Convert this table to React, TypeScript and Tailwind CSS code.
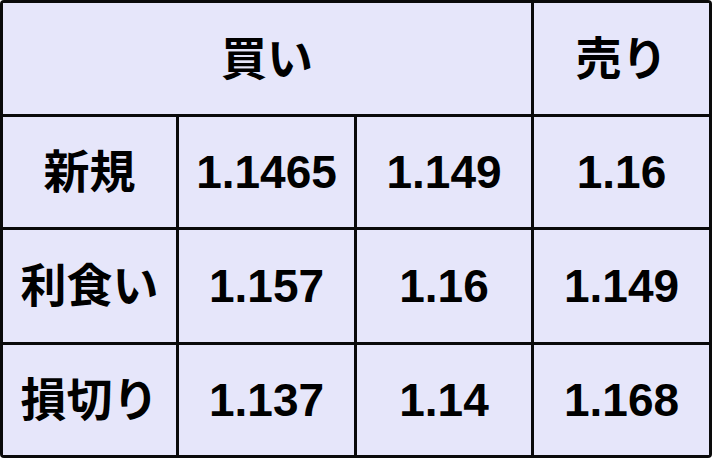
import { Fragment } from "react";

const rows = [
  { label: "新規", values: ["1.1465", "1.149", "1.16"] },
  { label: "利食い", values: ["1.157", "1.16", "1.149"] },
  { label: "損切り", values: ["1.137", "1.14", "1.168"] },
];

function Cell({ children, className = "" }: { children: React.ReactNode; className?: string }) {
  return (
    <div className={`bg-[#e6e6fa] flex items-center justify-center text-black font-bold text-[46px] leading-none ${className}`}>
      {children}
    </div>
  );
}

export default function App() {
  return (
    <div className="w-[712px] h-[458px] bg-white">
      <div
        className="w-full h-full bg-[#0a0a0a] rounded-[4px] p-[3px] grid grid-cols-[173px_175px_174px_175px] grid-rows-[111px_110px_112px_110px] gap-[3px]"
        style={{ fontFamily: '"Liberation Sans", "Noto Sans CJK JP", sans-serif' }}
      >
        <Cell className="col-span-3">買い</Cell>
        <Cell>売り</Cell>
        {rows.map((row) => (
          <Fragment key={row.label}>
            <Cell>{row.label}</Cell>
            {row.values.map((v, i) => (
              <Cell key={i}>{v}</Cell>
            ))}
          </Fragment>
        ))}
      </div>
    </div>
  );
}
